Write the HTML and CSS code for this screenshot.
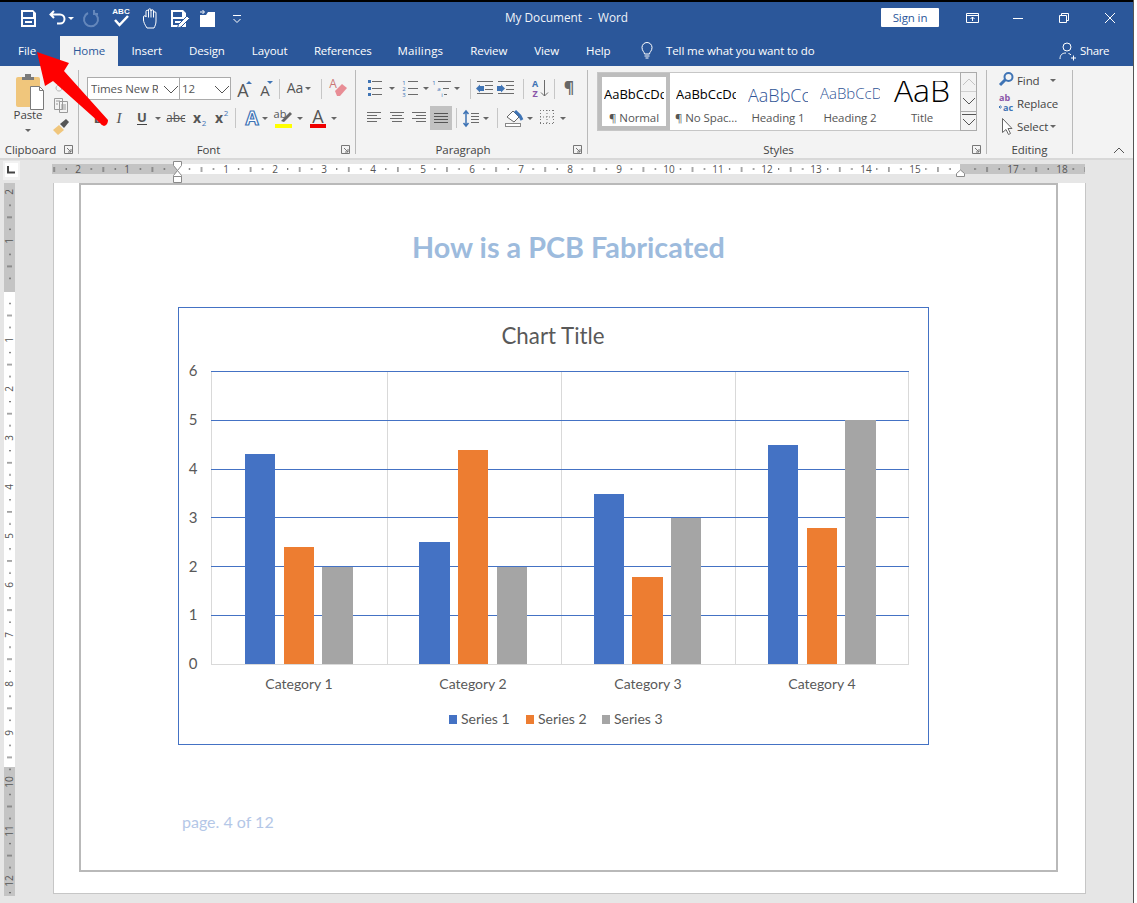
FILE: index.html
```html
<!DOCTYPE html>
<html lang="en">
<head>
<meta charset="utf-8">
<title>My Document - Word</title>
<link rel="stylesheet" href="styles.css">
</head>
<body>
<div class="window">
  <div class="topline"></div>
  <header class="titlebar">
    <div class="qat">
      <svg width="24" height="22"><path class="wf" fill-rule="evenodd" d="M5 3h12l3 3v14H5zM7 5v5h10V5zM7 12v6h11v-6z"/><rect class="wf" x="9" y="14" width="7" height="2"/></svg>
      <svg width="26" height="22"><path class="ws2" d="M14 4l-3.500 3.500L14 11M11 7.500h9a4.500 4.500 0 0 1 0 9h-3"/></svg>
      <span class="caret light"></span>
      <svg width="30" height="22"><path class="ds2" d="M12 6a7 7 0 1 0 6 0M18 3v4h4"/></svg>
      <svg width="30" height="26"><text class="abc" x="15" y="9" text-anchor="middle">ABC</text><path class="ws3" d="M9 15l4.500 5 8.500-9"/></svg>
      <svg width="28" height="24"><path class="ws1" d="M11 22C9 19 7.500 16 7.500 14V11a1.250 1.250 0 0 1 2.500 0V5.500a1.250 1.250 0 0 1 2.500 0V4a1.250 1.250 0 0 1 2.500 0V5a1.250 1.250 0 0 1 2.500 0V7a1.250 1.250 0 0 1 2.500 0v8c0 3-1 5-2 7zM12.500 5.500v6M15 4v7.500M17.500 5v6.500"/></svg>
      <svg width="30" height="22"><path class="wf" fill-rule="evenodd" d="M7 3h12l3 3v14H7zM9 5v5h9V5zM9 12v6h11v-6z"/><rect class="wf" x="11" y="14" width="6" height="2"/><path class="pencil" d="M23 9l2.500 2.500-8.500 8.500-3.500 1 1-3.500z"/></svg>
      <svg width="28" height="22"><path class="wf" d="M6 8h6l2-3h7v15H6z"/><path class="ws1" d="M6 5h4M8.500 3l2 2-2 2"/></svg>
      <svg width="30" height="22"><path class="ws1" d="M11 8.500h8M11.500 12l3.500 3.500 3.500-3.500"/></svg>
    </div>
    <div class="doc-title">My Document &nbsp;-&nbsp; Word</div>
    <div class="win-controls">
      <button class="signin">Sign in</button>
      <span class="win-btn"><svg width="16" height="14"><path class="ws1" d="M2.500 2.500h12v9h-12zM2.500 4.500h12M8.500 10V6M6.500 8l2-2 2 2"/></svg></span>
      <span class="win-btn"><svg width="12" height="12"><path class="ws1" d="M1 6.500h10"/></svg></span>
      <span class="win-btn"><svg width="12" height="12"><path class="ws1" d="M1.500 3.500h7v7h-7zM3.500 3.500v-2h7v7h-2"/></svg></span>
      <span class="win-btn"><svg width="12" height="12"><path class="ws1" d="M1 1l10 10M11 1L1 11"/></svg></span>
    </div>
  </header>
  <nav class="tabs">
    <span class="tab file">File</span>
    <span class="tab active">Home</span>
    <span class="tab">Insert</span>
    <span class="tab">Design</span>
    <span class="tab">Layout</span>
    <span class="tab refs">References</span>
    <span class="tab mail">Mailings</span>
    <span class="tab">Review</span>
    <span class="tab">View</span>
    <span class="tab">Help</span>
    <span class="tell">
      <svg width="16" height="20"><path class="ws1" d="M5.500 13c0-2-2.500-3-2.500-6.500a5 5 0 0 1 10 0C13 10 10.500 11 10.500 13zM5.500 15h5M6.500 17h3"/></svg>
      <span>Tell me what you want to do</span>
    </span>
    <span class="share">
      <svg width="18" height="20"><path class="ws1" d="M1 18c0-4 2-6 6-6M4 6a4 4 0 1 1 8 0 4 4 0 0 1-8 0zM9.500 12.500c1 .2 2 .7 2.500 1.500M12 17h5M14.500 14.500v5"/></svg>
      <span class="share-text">Share</span>
    </span>
  </nav>

  <section class="ribbon">
    <div class="group g-clip">
      <div class="g-body clip-body">
        <div class="paste">
          <svg width="36" height="40"><rect x="6" y="5" width="24" height="30" rx="2" fill="#f0c67c"/><path d="M12 8V5h3V2h6v3h3v3z" fill="#7a7a7a"/><path d="M20.500 14.500h9l4 4v19h-13z" fill="#fff" stroke="#7a7a7a"/><path d="M29.500 14.500v4h4" fill="none" stroke="#7a7a7a"/></svg>
          <span class="paste-label">Paste</span>
          <span class="caret paste-caret"></span>
        </div>
        <div class="clip-tools">
          <svg width="20" height="20"><path d="M5 14a3 3 0 1 1 0 .1zM13 6l-6 6" fill="none" stroke="#b5b5b5"/></svg>
          <svg width="20" height="20"><path d="M3.500 3.500h8v11h-8zM8.500 6.500h8v11h-8zM5 6h4M5 9h2M10 10h5M10 12h5M10 14h5" fill="#f3f3f3" stroke="#9a9a9a"/></svg>
          <svg width="20" height="22"><path d="M2 14l6-5 5 5-6 5z" fill="#f0c67c"/><path d="M9 8l6-5 3 3-5 6z" fill="#555"/></svg>
        </div>
      </div>
      <div class="g-label"><span>Clipboard</span><i class="launcher"><svg width="9" height="9"><path d="M.5 8.500v-8h8v8zM3 3l4 4M4 7h3V4" fill="none" stroke="#777"/></svg></i></div>
    </div>

    <div class="group g-font">
      <div class="g-body rows">
        <div class="row r-top">
          <div class="combo c-font"><span class="combo-text">Times New Roman</span><svg width="16" height="10"><path class="chev" d="M1 2l7 7 7-7"/></svg></div>
          <div class="combo c-size"><span class="combo-text">12</span><svg width="16" height="10"><path class="chev" d="M1 2l7 7 7-7"/></svg></div>
          <svg width="23" height="23"><text class="ig big" x="12" y="20" text-anchor="middle">A</text><path d="M15 7l3-3 3 3z" fill="#3f74b5"/></svg>
          <svg width="21" height="23"><text class="ig med" x="11" y="19" text-anchor="middle">A</text><path d="M13 4h6l-3 3z" fill="#3f74b5"/></svg>
          <i class="sep"></i>
          <svg width="19" height="23"><text class="ig aa" x="11" y="16" text-anchor="middle">Aa</text></svg>
          <span class="caret"></span>
          <i class="sep sep-w"></i>
          <svg width="23" height="23"><text class="ig eras" x="7" y="11" text-anchor="middle">A</text><path d="M9 14l7-7 5 4-7 8h-3z" fill="#e88d95"/></svg>
        </div>
        <div class="row r-bot">
          <svg width="22" height="24"><text class="ig fmt b" x="11" y="17" text-anchor="middle">B</text></svg>
          <svg width="20" height="24"><text class="ig fmt it" x="10" y="17" text-anchor="middle">I</text></svg>
          <svg width="24" height="24"><text class="ig fmt u" x="13" y="16" text-anchor="middle">U</text><rect x="8" y="18" width="10" height="1" fill="#444"/></svg>
          <span class="caret"></span>
          <svg width="25" height="24"><text class="ig abc-s" x="13" y="16" text-anchor="middle">abc</text><rect x="4" y="12" width="18" height="1" fill="#555"/></svg>
          <svg width="21" height="24"><text class="ig fmt x" x="9" y="17" text-anchor="middle">x</text><text class="sub" x="16" y="20" text-anchor="middle">2</text></svg>
          <svg width="22" height="24"><text class="ig fmt x" x="10" y="17" text-anchor="middle">x</text><text class="sup" x="17" y="10" text-anchor="middle">2</text></svg>
          <i class="sep"></i>
          <svg width="20" height="24"><text class="fx" x="12" y="19" text-anchor="middle">A</text></svg>
          <span class="caret"></span>
          <svg width="25" height="24"><text class="ig ab" x="10" y="12" text-anchor="middle">ab</text><path d="M11 15l9-9 2 2-8 8z" fill="#666"/><rect x="5" y="18" width="17" height="4" fill="#ffff00"/></svg>
          <span class="caret"></span>
          <svg width="24" height="24"><text class="ig big2" x="13" y="17" text-anchor="middle">A</text><rect x="5" y="18" width="16" height="4" fill="#f00000"/></svg>
          <span class="caret"></span>
        </div>
      </div>
      <div class="g-label"><span>Font</span><i class="launcher"><svg width="9" height="9"><path d="M.5 8.500v-8h8v8zM3 3l4 4M4 7h3V4" fill="none" stroke="#777"/></svg></i></div>
    </div>

    <div class="group g-para">
      <div class="g-body rows">
        <div class="row r-top">
          <svg width="23" height="23"><path class="ln" d="M8 4.500h10M8 11.500h10M8 17.500h10"/><path class="bd" d="M4 3h3v3H4zM4 10h3v3H4zM4 16h3v3H4z"/></svg>
          <span class="caret"></span>
          <svg width="24" height="23"><path class="ln" d="M11 4.500h10M11 11.500h10M11 17.500h10"/><text class="num" x="7" y="8" text-anchor="middle">1</text><text class="num" x="7" y="14" text-anchor="middle">2</text><text class="num" x="7" y="20" text-anchor="middle">3</text></svg>
          <span class="caret"></span>
          <svg width="21" height="23"><path class="ln" d="M7 4.500h13M12 11.500h6M13 17.500h3"/><text class="num" x="3" y="8" text-anchor="middle">1</text><text class="num" x="8" y="14" text-anchor="middle">a</text><text class="num" x="11" y="20" text-anchor="middle">i</text></svg>
          <span class="caret"></span>
          <i class="sep sep-w"></i>
          <svg width="21" height="23"><path class="ln" d="M2 4.500h16M10 8.500h8M10 12.500h8M2 16.500h16"/><path class="bd" d="M9 9v5H5v1.500L1 11.500l4-4V9z"/></svg>
          <svg width="23" height="23"><path class="ln" d="M2 4.500h16M10 8.500h8M10 12.500h8M2 16.500h16"/><path class="bd" d="M1 9v5h4v1.500l4-4-4-4V9z"/></svg>
          <i class="sep"></i>
          <svg width="22" height="23"><text class="az a" x="7" y="10" text-anchor="middle">A</text><text class="az z" x="7" y="20" text-anchor="middle">Z</text><path class="ln" d="M16.500 3v16M13 15.500l3.500 3.500 3.500-3.500"/></svg>
          <i class="sep"></i>
          <svg width="20" height="23"><text class="pil" x="10" y="16" text-anchor="middle">¶</text></svg>
        </div>
        <div class="row r-bot">
          <svg width="22" height="24"><path class="ln" d="M3 6.500h14M3 9.500h10M3 12.500h14M3 15.500h10"/></svg>
          <svg width="22" height="24"><path class="ln" d="M4 6.500h14M6 9.500h10M4 12.500h14M6 15.500h10"/></svg>
          <svg width="22" height="24"><path class="ln" d="M4 6.500h14M8 9.500h10M4 12.500h14M8 15.500h10"/></svg>
          <svg class="active-tool" width="22" height="24"><path class="ln dk" d="M4 7.500h14M4 10.500h14M4 13.500h14M4 16.500h14"/></svg>
          <i class="sep"></i>
          <svg width="20" height="24"><path class="ln" d="M10 7.500h8M10 10.500h8M10 13.500h8M10 16.500h8"/><path class="sp" d="M5 5v15M2.500 8L5 5l2.500 3M2.500 17L5 20l2.500-3"/></svg>
          <span class="caret"></span>
          <i class="sep sep-m"></i>
          <svg width="23" height="24"><path d="M5 11l6-6 6 6-5 5z" fill="#fff" stroke="#666"/><path d="M13 5l5 5 2 4" fill="none" stroke="#3f74b5" stroke-width="3"/><rect x="3.500" y="17.500" width="15" height="3" fill="#fff" stroke="#888"/></svg>
          <span class="caret"></span>
          <svg width="23" height="24"><path class="dots" d="M5 4.500h14M5 17.500h14M5.500 4v14M18.500 4v14M12 4v14M5 11h14"/></svg>
          <span class="caret"></span>
        </div>
      </div>
      <div class="g-label"><span>Paragraph</span><i class="launcher"><svg width="9" height="9"><path d="M.5 8.500v-8h8v8zM3 3l4 4M4 7h3V4" fill="none" stroke="#777"/></svg></i></div>
    </div>

    <div class="group g-styles">
      <div class="g-body gallery-wrap">
        <div class="gallery">
          <div class="tile selected"><span class="sample">AaBbCcDdEe</span><span class="t-label">¶ Normal</span></div>
          <div class="tile"><span class="sample">AaBbCcDdEe</span><span class="t-label">¶ No Spac...</span></div>
          <div class="tile"><span class="sample h1">AaBbCcDd</span><span class="t-label">Heading 1</span></div>
          <div class="tile"><span class="sample h2">AaBbCcDdE</span><span class="t-label">Heading 2</span></div>
          <div class="tile"><span class="sample ttl">AaB</span><span class="t-label">Title</span></div>
        </div>
        <div class="scroller">
          <span class="sc-btn"><svg width="14" height="10"><path class="chev dis" d="M1 8l6-6 6 6"/></svg></span>
          <span class="sc-btn"><svg width="14" height="10"><path class="chev" d="M1 2l6 6 6-6"/></svg></span>
          <span class="sc-btn sc-more"><svg width="14" height="15"><path class="chev" d="M0 1.500h14M1 6l6 6 6-6"/></svg></span>
        </div>
      </div>
      <div class="g-label"><span>Styles</span><i class="launcher"><svg width="9" height="9"><path d="M.5 8.500v-8h8v8zM3 3l4 4M4 7h3V4" fill="none" stroke="#777"/></svg></i></div>
    </div>

    <div class="group g-edit">
      <div class="g-body edit-body">
        <div class="edit-row"><svg width="19" height="20"><circle cx="10.500" cy="7" r="4" fill="none" stroke="#3f74b5" stroke-width="2"/><path d="M2 15l5.500-5.500" stroke="#3f74b5" stroke-width="3"/></svg><span>Find</span><span class="caret find-caret"></span></div>
        <div class="edit-row"><svg width="19" height="20"><text class="rp ab1" x="1" y="8">ab</text><text class="rp ac1" x="5" y="18">ac</text><path d="M1 14h3M1 14l1.500-1.500M1 14l1.500 1.500" stroke="#3f74b5" fill="none"/></svg><span>Replace</span></div>
        <div class="edit-row"><svg width="19" height="20"><path d="M4.500 2.500v14l3.500-3 2.500 5 2-1-2.500-5H14z" fill="#fff" stroke="#666"/></svg><span>Select</span><span class="caret sel-caret"></span></div>
      </div>
      <div class="g-label no-launch"><span>Editing</span></div>
    </div>
    <div class="collapse"><svg width="12" height="7"><path class="chev" d="M1 6l5-5 5 5"/></svg></div>
  </section>

  <div class="ruler-row">
    <div class="corner"><span class="corner-in"><svg width="8" height="8"><path d="M1 0v6.500h7" fill="none" stroke="#444" stroke-width="2"/></svg></span></div>
    <svg class="hruler" width="1033" height="25" viewBox="52 158 1033 25">
      <defs>
        <pattern id="ht" patternUnits="userSpaceOnUse" x="177" y="164" width="49.100" height="10">
          <rect x="12" y="4" width="1" height="2" fill="#555"/><rect x="24" y="3" width="1" height="5" fill="#555"/><rect x="36" y="4" width="1" height="2" fill="#555"/>
        </pattern>
      </defs>
      <rect class="rg" x="52" y="164" width="125" height="10"/>
      <rect class="rw" x="177" y="164" width="783" height="10"/>
      <rect class="rg" x="960" y="164" width="125" height="10"/>
      <rect x="52" y="164" width="1033" height="10" fill="url(#ht)"/>
      <g class="rnum">
        <text x="78" y="173">2</text><text x="127" y="173">1</text><text x="226" y="173">1</text><text x="275" y="173">2</text><text x="324" y="173">3</text><text x="373" y="173">4</text><text x="423" y="173">5</text><text x="472" y="173">6</text><text x="521" y="173">7</text><text x="570" y="173">8</text><text x="619" y="173">9</text><text x="669" y="173">10</text><text x="718" y="173">11</text><text x="767" y="173">12</text><text x="816" y="173">13</text><text x="866" y="173">14</text><text x="915" y="173">15</text><text x="1013" y="173">17</text><text x="1062" y="173">18</text>
      </g>
      <path class="mk" d="M173.500 161.500h8v4l-4 5-4-5zM173.500 176.500v-1l4-5 4 5v1zM173.500 176.500h8v6h-8z"/>
      <path class="mk" d="M956.500 176.500v-3l4-3.500 4 3.500v3z"/>
    </svg>
  </div>

  <div class="doc-row">
    <svg class="vruler" width="11" height="720" viewBox="4 183 11 720">
      <defs>
        <pattern id="vt" patternUnits="userSpaceOnUse" x="4" y="291" width="11" height="49.100">
          <rect x="5" y="12" width="2" height="1" fill="#555"/><rect x="3" y="24" width="5" height="1" fill="#555"/><rect x="5" y="36" width="2" height="1" fill="#555"/>
        </pattern>
      </defs>
      <rect class="rg" x="4" y="183" width="11" height="109"/>
      <rect class="rw" x="4" y="292" width="11" height="475"/>
      <rect class="rg" x="4" y="767" width="11" height="129"/>
      <rect x="4" y="183" width="11" height="713" fill="url(#vt)"/>
      <g class="rnum">
        <text transform="translate(13 192) rotate(-90)">2</text><text transform="translate(13 241) rotate(-90)">1</text><text transform="translate(13 340) rotate(-90)">1</text><text transform="translate(13 389) rotate(-90)">2</text><text transform="translate(13 438) rotate(-90)">3</text><text transform="translate(13 487) rotate(-90)">4</text><text transform="translate(13 536) rotate(-90)">5</text><text transform="translate(13 585) rotate(-90)">6</text><text transform="translate(13 635) rotate(-90)">7</text><text transform="translate(13 684) rotate(-90)">8</text><text transform="translate(13 733) rotate(-90)">9</text><text transform="translate(13 782) rotate(-90)">10</text><text transform="translate(13 831) rotate(-90)">11</text><text transform="translate(13 881) rotate(-90)">12</text>
      </g>
    </svg>
    <main class="page">
      <div class="page-frame">
        <h1 class="doc-heading">How is a PCB Fabricated</h1>
        <figure class="chart">
          <svg width="749" height="436" viewBox="179 308 749 436">
            <text class="c-title" x="553" y="344" text-anchor="middle">Chart Title</text>
            <g class="v-grid">
              <path d="M211.500 371v293M387.500 371v293M561.500 371v293M735.500 371v293M908.500 371v293"/>
            </g>
            <path class="h-axis" d="M211 664.500h698"/>
            <path class="h-grid" d="M211 371.500h698M211 420.500h698M211 469.500h698M211 517.500h698M211 566.500h698M211 615.500h698"/>
            <g class="s1">
              <rect x="245" y="454" width="30" height="210"/><rect x="419" y="542" width="31" height="122"/><rect x="594" y="494" width="30" height="170"/><rect x="768" y="445" width="30" height="219"/>
            </g>
            <g class="s2">
              <rect x="284" y="547" width="30" height="117"/><rect x="458" y="450" width="30" height="214"/><rect x="632" y="577" width="31" height="87"/><rect x="807" y="528" width="30" height="136"/>
            </g>
            <g class="s3">
              <rect x="322" y="567" width="31" height="97"/><rect x="497" y="567" width="30" height="97"/><rect x="671" y="518" width="30" height="146"/><rect x="845" y="420" width="31" height="244"/>
            </g>
            <g class="c-axis">
              <text x="193" y="376" text-anchor="middle">6</text><text x="193" y="425" text-anchor="middle">5</text><text x="193" y="474" text-anchor="middle">4</text><text x="193" y="523" text-anchor="middle">3</text><text x="193" y="572" text-anchor="middle">2</text><text x="193" y="620" text-anchor="middle">1</text><text x="193" y="669" text-anchor="middle">0</text>
            </g>
            <g class="c-cat">
              <text x="299" y="689" text-anchor="middle">Category 1</text><text x="473" y="689" text-anchor="middle">Category 2</text><text x="648" y="689" text-anchor="middle">Category 3</text><text x="822" y="689" text-anchor="middle">Category 4</text>
            </g>
            <g class="c-leg">
              <rect class="s1" x="449" y="715" width="8" height="9"/><text x="461" y="724">Series 1</text>
              <rect class="s2" x="526" y="715" width="8" height="9"/><text x="538" y="724">Series 2</text>
              <rect class="s3" x="602" y="715" width="8" height="9"/><text x="614" y="724">Series 3</text>
            </g>
          </svg>
        </figure>
        <p class="page-num">page. 4 of 12</p>
      </div>
    </main>
  </div>
</div>
<svg class="red-arrow" width="120" height="130" viewBox="0 0 120 130"><path d="M37 52L69 63 64 71 108 120Q108 125 104 126 101 125 100 123L53 81 45 86z"/></svg>
</body>
</html>
```

FILE: styles.css
```css
* { box-sizing: border-box; }
html, body { margin: 0; padding: 0; }
body {
  width: 1137px;
  height: 903px;
  overflow: hidden;
  background: #fff;
  font-family: "Open Sans", "Liberation Sans", sans-serif;
  font-size: 11.500px;
  letter-spacing: -0.100px;
  color: #444;
  position: relative;
}
svg { display: block; flex: none; overflow: visible; letter-spacing: 0; }
.hruler, .vruler { overflow: hidden; }
i { font-style: normal; }

.window { width: 1134px; height: 903px; border-right: 1px solid #555; display: flex; flex-direction: column; overflow: hidden; }
.topline { height: 2px; background: #000; flex: none; }

.titlebar { height: 34px; flex: none; background: #2b579a; display: grid; grid-template-columns: 1fr auto 1fr; align-items: center; color: #fff; }
.qat { display: flex; align-items: center; padding: 0 0 2px 16px; }
.doc-title { color: #f0f3f8; padding-bottom: 4px; font-size: 11.800px; letter-spacing: 0; }
.win-controls { display: flex; justify-content: flex-end; align-items: center; height: 100%; }
.signin { width: 58px; height: 19px; padding: 0; margin: 0 10px 3px 0; border: 0; border-radius: 1px; background: #fff; color: #2b579a; font: 11.500px "Open Sans", sans-serif; letter-spacing: -0.100px; }
.win-btn { width: 46px; height: 100%; display: flex; align-items: center; justify-content: center; padding-bottom: 3px; }

.wf { fill: #fff; }
.ws1 { fill: none; stroke: #fff; stroke-width: 1; }
.ws2 { fill: none; stroke: #fff; stroke-width: 2; }
.ws3 { fill: none; stroke: #fff; stroke-width: 2.500; }
.ds2 { fill: none; stroke: #6487bb; stroke-width: 2; }
.pencil { fill: #fff; stroke: #2b579a; stroke-width: 1; }
.abc { font: bold 8px "Liberation Sans", sans-serif; fill: #fff; }

.caret { width: 10px; height: 10px; flex: none; display: flex; align-items: center; justify-content: center; }
.caret::after { content: ""; border-left: 3px solid transparent; border-right: 3px solid transparent; border-top: 3px solid #666; }
.caret.light::after { border-top-color: #fff; }

.tabs { height: 30px; flex: none; background: #2b579a; display: flex; align-items: stretch; color: #fff; }
.tab { padding: 0 13.500px 1px; display: flex; align-items: center; }
.tab.file { width: 60px; padding: 0 0 1px 18px; letter-spacing: 0; }
.tab.active { background: #f3f3f3; color: #2b579a; padding: 0 0 1px; width: 58px; justify-content: center; }
.tab.refs { padding-left: 13px; padding-right: 13px; letter-spacing: -0.200px; }
.tab.mail { letter-spacing: 0.200px; padding-left: 13px; padding-right: 13.500px; }
.tell { display: flex; align-items: center; gap: 11px; margin-left: 15px; padding-bottom: 1px; }
.share { display: flex; align-items: center; gap: 3px; margin-left: auto; margin-right: 24px; padding-bottom: 1px; }
.share-text { letter-spacing: -0.400px; }

.ribbon { height: 94px; flex: none; background: #f3f3f3; border-bottom: 2px solid #d8d8d8; display: flex; padding-top: 4px; }
.group { height: 84px; border-right: 1px solid #b9b9b9; display: flex; flex-direction: column; flex: none; }
.g-clip { width: 79px; }
.g-font { width: 277px; }
.g-para { width: 232px; }
.g-styles { width: 399px; }
.g-edit { width: 86px; }
.g-body { flex: 1; min-height: 0; }
.g-label { height: 10px; flex: none; display: flex; line-height: 12px; color: #444; }
.g-label > span { flex: 1; text-align: center; }
.launcher { width: 17px; display: flex; align-items: center; justify-content: center; padding-right: 2px; }
.collapse { margin-left: auto; margin-right: 8px; align-self: flex-end; padding-bottom: 4px; }

.clip-body { display: flex; padding: 1px 0 0 5px; }
.paste { width: 46px; display: flex; flex-direction: column; align-items: center; padding-top: 1px; }
.paste-label { line-height: 14px; margin-top: -4px; }
.paste-caret { margin-top: 3px; }
.clip-tools { display: flex; flex-direction: column; gap: 1px; padding-top: 3px; }

.rows { display: flex; flex-direction: column; gap: 6px; padding: 7px 0 0 8px; }
.row { display: flex; align-items: center; }
.r-top { height: 23px; }
.r-bot { height: 24px; }
.sep { width: 1px; height: 20px; margin: 0 4px; background: #c6c6c6; flex: none; }
.sep-w { margin-left: 8px; }
.sep-m { margin-left: 6px; }

.combo { height: 23px; background: #fff; border: 1px solid #ababab; display: flex; align-items: center; flex: none; overflow: hidden; }
.c-font { width: 93px; padding-left: 3px; }
.c-size { width: 51px; padding-left: 2px; border-left: 0; }
.combo-text { flex: 1; min-width: 0; white-space: nowrap; overflow: hidden; color: #555; }
.c-font .combo-text { margin-right: 5px; }
.chev { fill: none; stroke: #555; stroke-width: 1; }
.chev.dis { stroke: #c4c4c4; }

.ig { fill: #555; font-family: "Open Sans", sans-serif; }
.big { font-size: 18px; }
.med { font-size: 15px; }
.aa { font-size: 14px; }
.eras { font-size: 12px; fill: #c77; }
.fmt { font-size: 13px; font-weight: 700; }
.fmt.it { font-family: "Liberation Serif", serif; font-style: italic; font-weight: 400; font-size: 15px; }
.fmt.x { font-size: 14px; }
.sub, .sup { font: 8px "Open Sans", sans-serif; fill: #3f74b5; }
.abc-s { font-size: 12px; }
.fx { font: 700 19px "Open Sans", sans-serif; fill: #fff; stroke: #3f74b5; stroke-width: 1.200; }
.ab { font-size: 11px; }
.big2 { font-size: 18px; }

.ln { fill: none; stroke: #6b6b6b; stroke-width: 1; }
.ln.dk { stroke: #555; }
.bd { fill: #3f74b5; }
.sp { fill: none; stroke: #3f74b5; stroke-width: 1.500; }
.num { font: 6px "Open Sans", sans-serif; fill: #3f74b5; }
.az { font: 700 9px "Open Sans", sans-serif; }
.az.a { fill: #3f74b5; }
.az.z { fill: #8a55a8; }
.pil { font: 700 16px "Open Sans", sans-serif; fill: #666; }
.active-tool { background: #c2c2c2; }
.dots { fill: none; stroke: #777; stroke-dasharray: 1 2; }

.gallery-wrap { display: flex; padding: 2px 0 0 9px; }
.gallery { display: flex; width: 363px; height: 59px; background: #fff; border: 1px solid #c6c6c6; border-right: 0; padding-right: 3px; }
.tile { width: 72px; height: 57px; display: flex; flex-direction: column; align-items: center; overflow: hidden; flex: none; }
.tile.selected { border: 4px solid #bdbdbd; }
.sample { width: 60px; height: 27px; flex: none; margin: 8px 0 3px; overflow: hidden; white-space: nowrap; color: #000; font-size: 13px; letter-spacing: 0; line-height: 27px; }
.tile.selected .sample { margin-top: 4px; }
.t-label { line-height: 14px; color: #555; white-space: nowrap; flex: none; }
.sample.h1 { color: #2f5496; font-size: 18px; font-weight: 300; line-height: 28px; }
.sample.h2 { color: #2f5496; font-size: 15px; font-weight: 300; line-height: 25px; }
.sample.ttl { font-size: 32px; line-height: 17px; text-align: center; font-weight: 300; }
.scroller { width: 17px; display: flex; flex-direction: column; height: 59px; border: 1px solid #ababab; background: #f3f3f3; }
.sc-btn { flex: 1; display: flex; align-items: center; justify-content: center; border-bottom: 1px solid #ababab; }
.sc-btn:first-child { border-color: #d0d0d0; }
.sc-btn.sc-more { border-bottom: 0; }

.edit-body { display: flex; flex-direction: column; gap: 3px; padding-left: 11px; }
.edit-row { height: 20px; display: flex; align-items: center; white-space: nowrap; }
.find-caret { margin-left: 8px; }
.rp { font: 700 9px "Open Sans", sans-serif; }
.ab1 { fill: #8a55a8; }
.ac1 { fill: #3f74b5; }

.ruler-row { height: 23px; flex: none; background: #e6e6e6; display: flex; }
.corner { width: 17px; height: 19px; margin: 1px 0 0 3px; background: #f2f2f2; padding: 2px; flex: none; }
.corner-in { display: flex; width: 13px; height: 14px; background: #fff; align-items: center; justify-content: center; padding-right: 2px; }
.hruler { margin: -2px 0 0 32px; }
.rg { fill: #c4c4c4; }
.rw { fill: #fff; }
.rnum text { font: 10px "Open Sans", sans-serif; fill: #555; text-anchor: middle; }
.mk { fill: #fff; stroke: #8a8a8a; stroke-width: 1; }

.doc-row { flex: 1; min-height: 0; background: #e6e6e6; display: flex; align-items: flex-start; }
.vruler { margin: 0 38px 0 4px; }
.page { width: 1033px; height: 711px; background: #fff; border: 1px solid #c6c6c6; border-top: 0; padding-left: 25px; }
.page-frame { width: 979px; height: 689px; border: 2px solid #b9b9b9; }
.doc-heading { margin: 0; padding-top: 45px; height: 122px; text-align: center; font: 700 28.800px "Lato", sans-serif; letter-spacing: 0; color: #9dbbdd; }
.chart { margin: 0 0 0 97px; width: 751px; height: 438px; border: 1px solid #4472c4; }
.page-num { margin: 67px 0 0 101px; font: 16px "Lato", sans-serif; letter-spacing: 0; color: #b4c7e7; }

.c-title { font: 22.300px "Lato", sans-serif; fill: #595959; }
.v-grid path { stroke: #d9d9d9; fill: none; }
.h-axis { stroke: #d9d9d9; fill: none; }
.h-grid { stroke: #4472c4; fill: none; }
.s1, .s1 rect { fill: #4472c4; }
.s2, .s2 rect { fill: #ed7d31; }
.s3, .s3 rect { fill: #a5a5a5; }
.c-axis text { font: 15px "Lato", sans-serif; fill: #595959; }
.c-cat text { font: 14px "Lato", sans-serif; fill: #595959; }
.c-leg text { font: 14px "Lato", sans-serif; fill: #595959; }

.red-arrow { position: absolute; left: 0; top: 0; }
.red-arrow path { fill: #ff0000; }
```
